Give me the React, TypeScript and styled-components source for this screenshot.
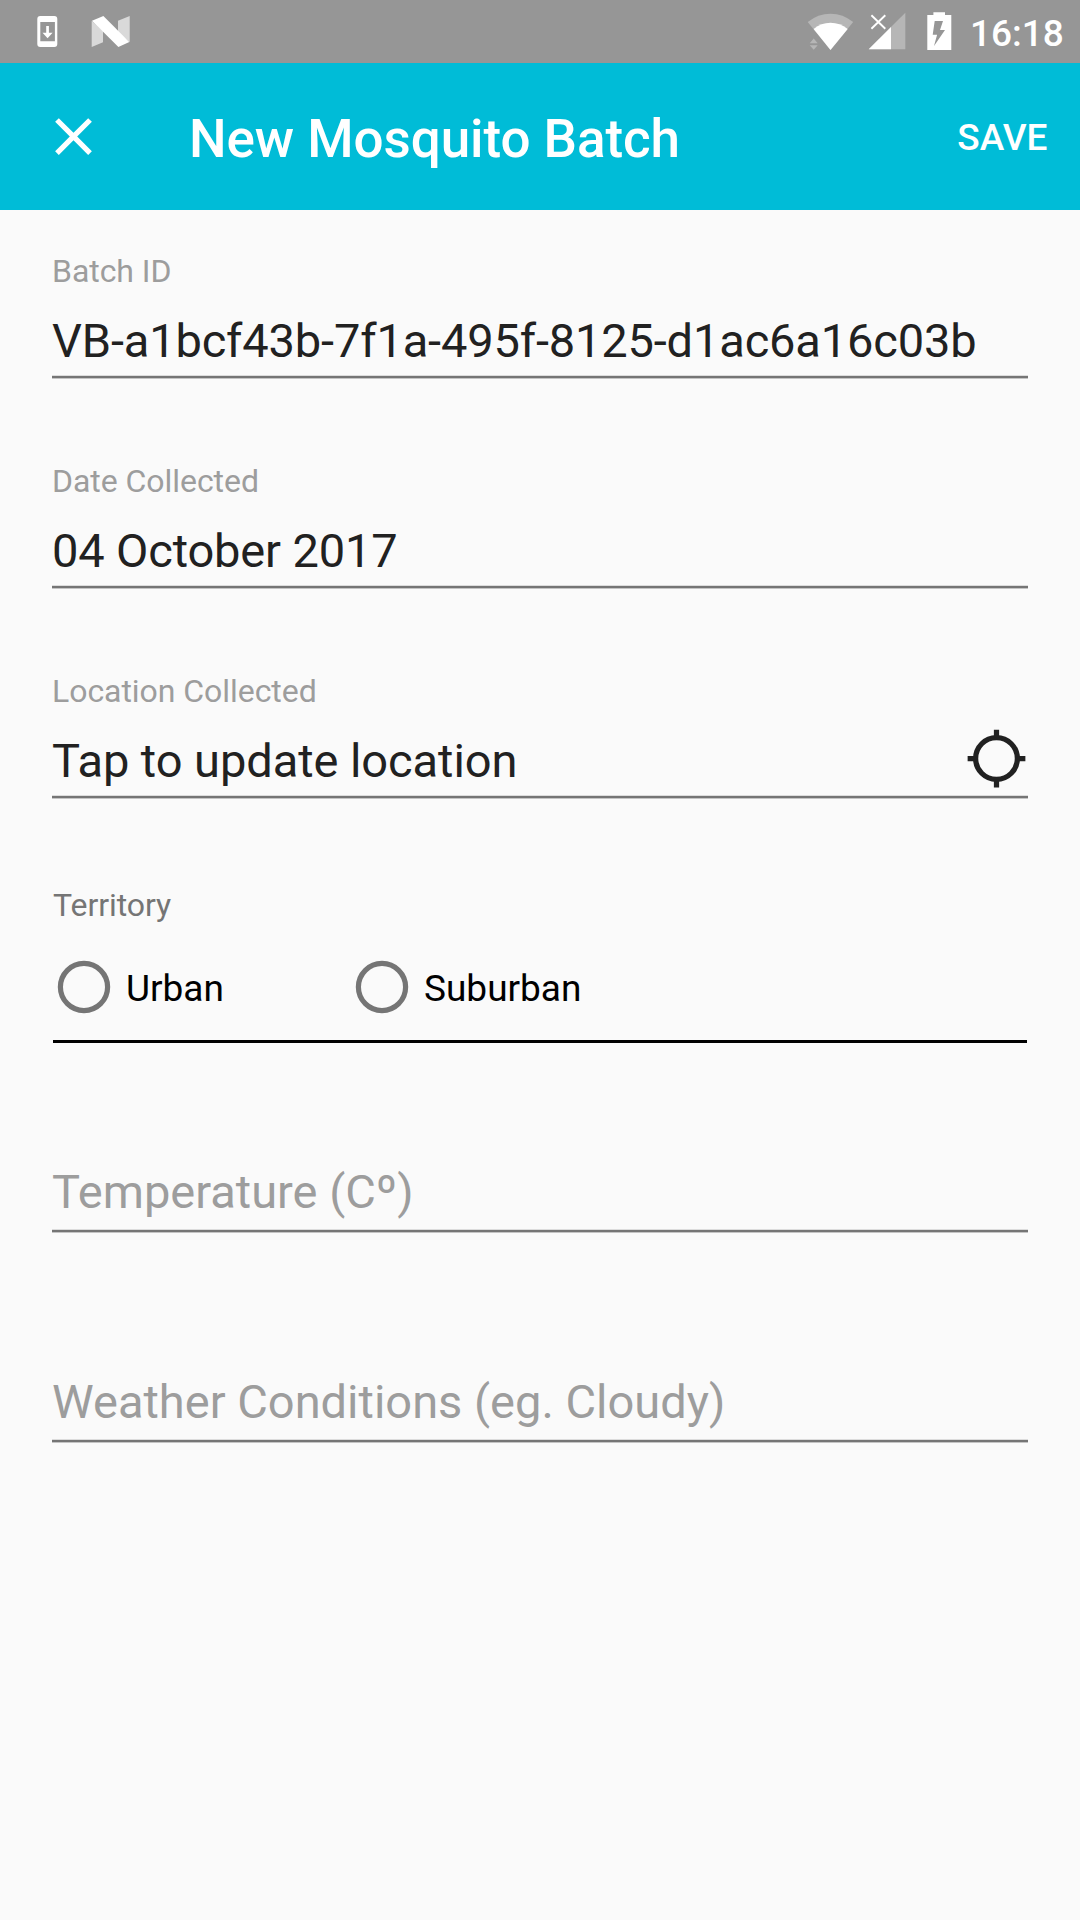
import React from "react";
import styled, { createGlobalStyle } from "styled-components";

const GlobalStyle = createGlobalStyle`
  body {
    margin: 0;
    background: #fafafa;
    font-family: Roboto, "Liberation Sans", sans-serif;
  }
`;

const Screen = styled.div`
  width: 1080px;
  height: 1920px;
  display: flex;
  flex-direction: column;
  overflow: hidden;
  background: #fafafa;
`;

const StatusBar = styled.div`
  height: 63px;
  flex: none;
  display: flex;
  justify-content: space-between;
  background: #969696;
`;

const StatusGroup = styled.div`
  display: flex;
  height: 63px;
`;

const Clock = styled.div`
  width: 110px;
  padding-top: 6px;
  line-height: 55px;
  font-size: 37px;
  font-weight: 500;
  color: #fff;
`;

const AppBar = styled.header`
  height: 147px;
  flex: none;
  box-sizing: border-box;
  display: flex;
  align-items: center;
  padding: 0 32.5px 0 42px;
  background: #00bcd7;
  color: #fff;
`;

const IconButton = styled.button`
  width: 63px;
  height: 63px;
  padding: 0;
  border: 0;
  background: none;
  color: inherit;
  svg {
    display: block;
  }
`;

const Title = styled.h1`
  flex: 1;
  margin: 0 0 0 84px;
  padding-top: 5px;
  font-size: 53px;
  line-height: 64px;
  font-weight: 500;
  letter-spacing: -0.07px;
`;

const SaveButton = styled.button`
  padding: 2px 0 0;
  border: 0;
  background: none;
  color: inherit;
  font: 500 37px/49px Roboto, "Liberation Sans", sans-serif;
`;

const Form = styled.main`
  display: flex;
  flex-direction: column;
  padding: 41px 52px 0;
`;

const Field = styled.div<{ $gap?: number }>`
  display: flex;
  flex-direction: column;
  margin-top: ${(p) => p.$gap ?? 0}px;
`;

const Label = styled.div<{ $dark?: boolean }>`
  height: 40px;
  line-height: 40px;
  font-size: 32px;
  letter-spacing: -0.05px;
  color: ${(p) => (p.$dark ? "#757575" : "#9d9d9d")};
  padding-left: ${(p) => (p.$dark ? 1 : 0)}px;
`;

const ValueRow = styled.div<{
  $top: number;
  $bottom: number;
  $hint?: boolean;
  $tracking?: number;
}>`
  display: flex;
  justify-content: space-between;
  height: 56px;
  line-height: 55px;
  margin: ${(p) => p.$top}px 0 ${(p) => p.$bottom}px;
  font-size: 47px;
  letter-spacing: ${(p) => p.$tracking ?? 0}px;
  white-space: nowrap;
  color: ${(p) => (p.$hint ? "#9d9d9d" : "#212121")};
`;

const Underline = styled.div`
  height: 4px;
  background: linear-gradient(#dcdcdc 1px, #757575 1px 3px, #c4c4c4 3px);
`;

const LocateIcon = styled.svg`
  display: block;
  width: 63px;
  height: 63px;
  margin-top: -6px;
`;

const RadioRow = styled.div`
  display: flex;
  height: 55px;
  margin-top: 36px;
  padding-left: 6px;
`;

const RadioOption = styled.label`
  display: flex;
  width: 298px;
  line-height: 55px;
  font-size: 37px;
  color: #000;
`;

const RadioRing = styled.svg`
  flex: none;
  display: block;
  width: 52px;
  height: 52px;
  margin-right: 16px;
  overflow: visible;
`;

const GroupLine = styled.div`
  height: 3px;
  margin: 24px 1px 0;
  background: #000;
`;

const NotificationIcons = () => (
  <svg width="140" height="63" viewBox="0 0 140 63">
    <path
      fill="#fff"
      fillRule="evenodd"
      d="M40.3 16h14a3 3 0 0 1 3 3v25a3 3 0 0 1-3 3h-14a3 3 0 0 1-3-3V19a3 3 0 0 1 3-3zM40.3 22v19.2h14.6V22z"
    />
    <path fill="#fff" d="M46.2 26h2.7v6.8h3.7l-5 5.5-5.1-5.5h3.7z" />
    <path fill="#d9d9d9" d="M91.7 20.8L103 31v11.3L91.7 47zM118 20.8L129.7 16v26L118 33z" />
    <path fill="#fff" d="M92 20.8L103.4 16 129.3 42 118.4 47z" />
  </svg>
);

const SystemIcons = () => (
  <svg width="170" height="63" viewBox="800 0 170 63">
    <path fill="#b6b6b6" d="M807.7 22Q818 13.7 830.5 13.7T853.2 22L830.5 50z" />
    <path fill="#fff" d="M813.6 29Q821 22.8 830.5 22.8T847.7 29L830.5 50z" />
    <path fill="#b6b6b6" d="M809.7 43.3L813.7 38.4 817.7 43.3zM809.7 45.2L813.7 49.8 817.7 45.2z" />
    <path fill="#b6b6b6" d="M905.3 12.7V49.3H868.7z" />
    <path fill="#fff" d="M891 27V49.3H868.7z" />
    <path stroke="#fff" strokeWidth="1.9" d="M871.4 15.2L885.3 28.8M885.3 15.2L871.4 28.8" />
    <path
      fill="#fff"
      fillRule="evenodd"
      d="M933.4 12.2h11.6V15h6.3v35h-24V15h6.1zM934.7 21l-2 13.7h4.4L934 46l11-16h-5l3-9z"
    />
  </svg>
);

interface TextFieldProps {
  label: string;
  value: string;
  gap?: number;
  tracking?: number;
  trailing?: React.ReactNode;
}

const TextField = ({ label, value, gap, tracking, trailing }: TextFieldProps) => (
  <Field $gap={gap}>
    <Label>{label}</Label>
    <ValueRow $top={22} $bottom={6} $tracking={tracking}>
      <span>{value}</span>
      {trailing}
    </ValueRow>
    <Underline />
  </Field>
);

const HintField = ({ hint, gap }: { hint: string; gap: number }) => (
  <Field $gap={gap}>
    <ValueRow $top={0} $bottom={9} $hint>
      <span>{hint}</span>
    </ValueRow>
    <Underline />
  </Field>
);

const Crosshair = () => (
  <LocateIcon viewBox="0 0 24 24" fill="none" stroke="#212121" strokeWidth="2">
    <circle cx="12" cy="12" r="7.95" />
    <path d="M12 1v3M12 20v3M1 12h3M20 12h3" />
  </LocateIcon>
);

const Radio = ({ children }: { children: React.ReactNode }) => (
  <RadioOption>
    <RadioRing viewBox="0 0 52 52">
      <circle cx="26" cy="26" r="23.6" fill="none" stroke="#757575" strokeWidth="5.2" />
    </RadioRing>
    {children}
  </RadioOption>
);

export default function App() {
  return (
    <Screen>
      <GlobalStyle />
      <StatusBar>
        <StatusGroup>
          <NotificationIcons />
        </StatusGroup>
        <StatusGroup>
          <SystemIcons />
          <Clock>16:18</Clock>
        </StatusGroup>
      </StatusBar>
      <AppBar>
        <IconButton aria-label="Close">
          <svg width="63" height="63" viewBox="0 0 24 24" fill="#fff">
            <path d="M19 6.41L17.59 5 12 10.59 6.41 5 5 6.41 10.59 12 5 17.59 6.41 19 12 13.41 17.59 19 19 17.59 13.41 12z" />
          </svg>
        </IconButton>
        <Title>New Mosquito Batch</Title>
        <SaveButton>SAVE</SaveButton>
      </AppBar>
      <Form>
        <TextField
          label="Batch ID"
          value="VB-a1bcf43b-7f1a-495f-8125-d1ac6a16c03b"
          tracking={-0.15}
        />
        <TextField label="Date Collected" value="04 October 2017" gap={82} tracking={-0.15} />
        <TextField
          label="Location Collected"
          value="Tap to update location"
          gap={82}
          tracking={-0.06}
          trailing={<Crosshair />}
        />
        <Field $gap={86}>
          <Label $dark>Territory</Label>
          <RadioRow>
            <Radio>Urban</Radio>
            <Radio>Suburban</Radio>
          </RadioRow>
          <GroupLine />
        </Field>
        <HintField hint="Temperature (Cº)" gap={121} />
        <HintField hint="Weather Conditions (eg. Cloudy)" gap={141} />
      </Form>
    </Screen>
  );
}
